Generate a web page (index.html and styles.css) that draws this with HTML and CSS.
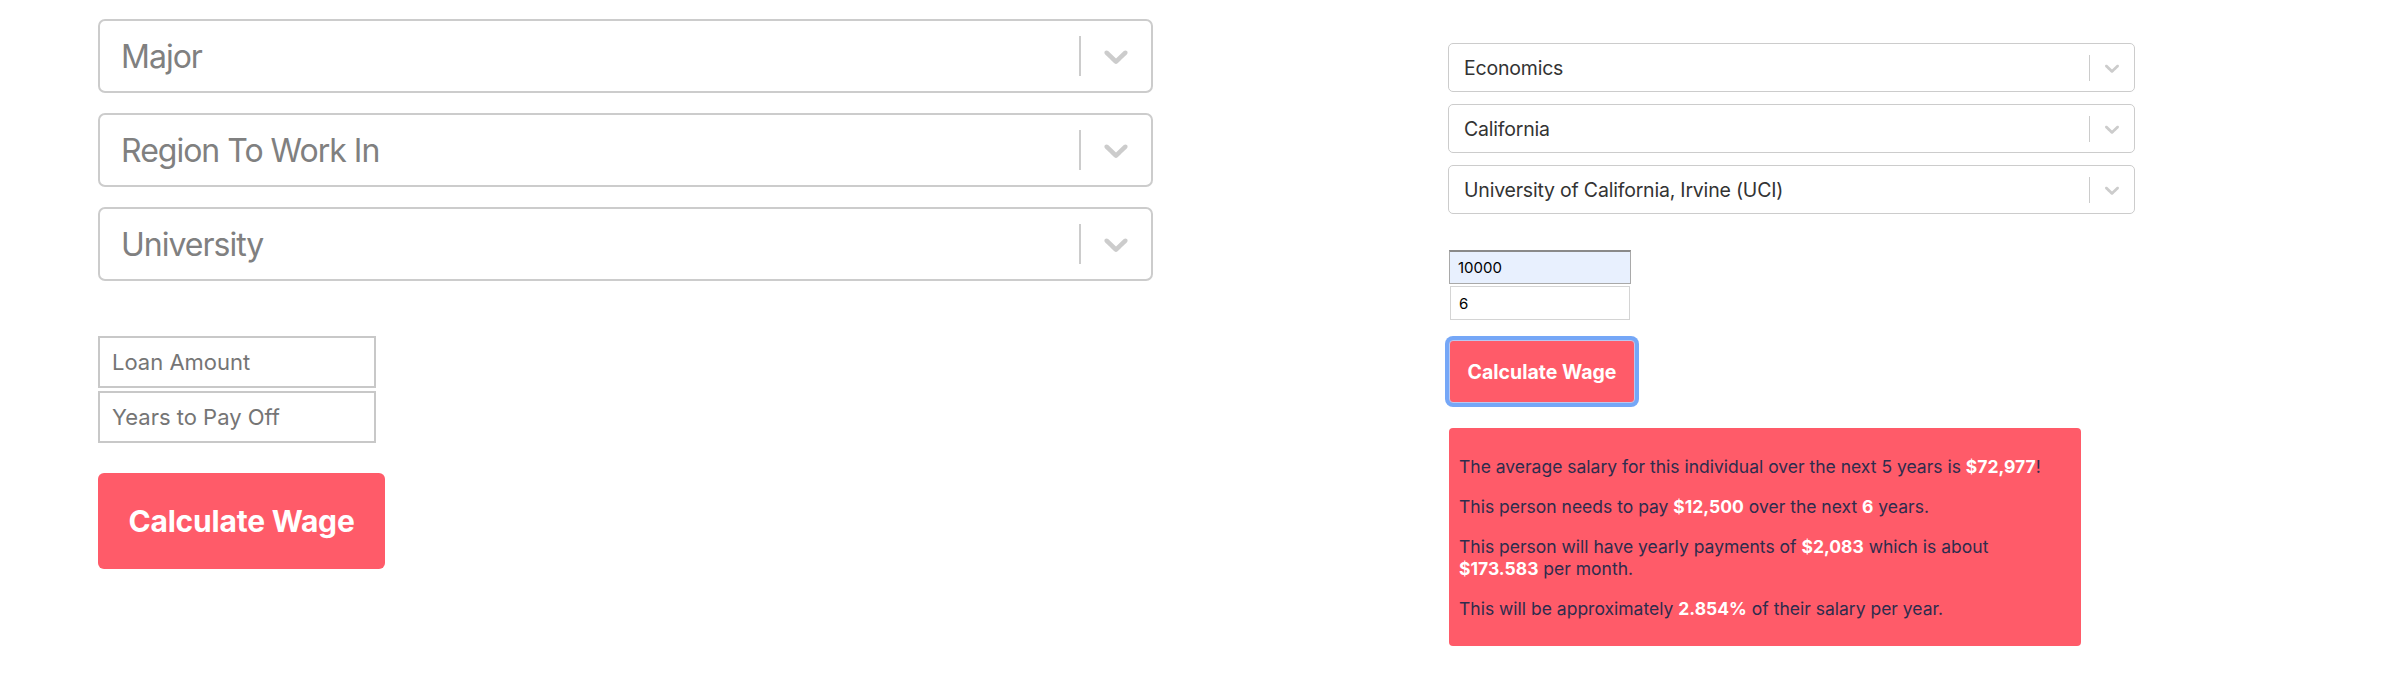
FILE: index.html
```html
<!DOCTYPE html>
<html>
<head>
<meta charset="utf-8">
<link rel="stylesheet" href="styles.css">
</head>
<body>
<div class="page">
  <div class="col-left">
    <div class="select-lg">
      <div class="value-lg placeholder">Major</div>
      <span class="sep-lg"></span>
      <div class="ind-lg"><svg viewBox="0 0 20 20" width="40" height="40"><path d="M4.516 7.548c0.436-0.446 1.043-0.481 1.576 0l3.908 3.747 3.908-3.747c0.533-0.481 1.141-0.446 1.574 0 0.436 0.445 0.408 1.197 0 1.615-0.406 0.418-4.695 4.502-4.695 4.502-0.217 0.223-0.502 0.335-0.787 0.335s-0.57-0.112-0.789-0.335c0 0-4.287-4.084-4.695-4.502s-0.436-1.17 0-1.615z"/></svg></div>
    </div>
    <div class="select-lg">
      <div class="value-lg placeholder">Region To Work In</div>
      <span class="sep-lg"></span>
      <div class="ind-lg"><svg viewBox="0 0 20 20" width="40" height="40"><path d="M4.516 7.548c0.436-0.446 1.043-0.481 1.576 0l3.908 3.747 3.908-3.747c0.533-0.481 1.141-0.446 1.574 0 0.436 0.445 0.408 1.197 0 1.615-0.406 0.418-4.695 4.502-4.695 4.502-0.217 0.223-0.502 0.335-0.787 0.335s-0.57-0.112-0.789-0.335c0 0-4.287-4.084-4.695-4.502s-0.436-1.17 0-1.615z"/></svg></div>
    </div>
    <div class="select-lg">
      <div class="value-lg placeholder">University</div>
      <span class="sep-lg"></span>
      <div class="ind-lg"><svg viewBox="0 0 20 20" width="40" height="40"><path d="M4.516 7.548c0.436-0.446 1.043-0.481 1.576 0l3.908 3.747 3.908-3.747c0.533-0.481 1.141-0.446 1.574 0 0.436 0.445 0.408 1.197 0 1.615-0.406 0.418-4.695 4.502-4.695 4.502-0.217 0.223-0.502 0.335-0.787 0.335s-0.57-0.112-0.789-0.335c0 0-4.287-4.084-4.695-4.502s-0.436-1.17 0-1.615z"/></svg></div>
    </div>
    <div class="inputs-lg">
      <input class="input-lg" type="text" placeholder="Loan Amount">
      <input class="input-lg" type="text" placeholder="Years to Pay Off">
    </div>
    <button class="btn-lg">Calculate Wage</button>
  </div>

  <div class="col-right">
    <div class="select-sm">
      <div class="value-sm">Economics</div>
      <span class="sep-sm"></span>
      <div class="ind-sm"><svg viewBox="0 0 20 20" width="24" height="24"><path d="M4.516 7.548c0.436-0.446 1.043-0.481 1.576 0l3.908 3.747 3.908-3.747c0.533-0.481 1.141-0.446 1.574 0 0.436 0.445 0.408 1.197 0 1.615-0.406 0.418-4.695 4.502-4.695 4.502-0.217 0.223-0.502 0.335-0.787 0.335s-0.57-0.112-0.789-0.335c0 0-4.287-4.084-4.695-4.502s-0.436-1.17 0-1.615z"/></svg></div>
    </div>
    <div class="select-sm">
      <div class="value-sm">California</div>
      <span class="sep-sm"></span>
      <div class="ind-sm"><svg viewBox="0 0 20 20" width="24" height="24"><path d="M4.516 7.548c0.436-0.446 1.043-0.481 1.576 0l3.908 3.747 3.908-3.747c0.533-0.481 1.141-0.446 1.574 0 0.436 0.445 0.408 1.197 0 1.615-0.406 0.418-4.695 4.502-4.695 4.502-0.217 0.223-0.502 0.335-0.787 0.335s-0.57-0.112-0.789-0.335c0 0-4.287-4.084-4.695-4.502s-0.436-1.17 0-1.615z"/></svg></div>
    </div>
    <div class="select-sm">
      <div class="value-sm">University of California, Irvine (UCI)</div>
      <span class="sep-sm"></span>
      <div class="ind-sm"><svg viewBox="0 0 20 20" width="24" height="24"><path d="M4.516 7.548c0.436-0.446 1.043-0.481 1.576 0l3.908 3.747 3.908-3.747c0.533-0.481 1.141-0.446 1.574 0 0.436 0.445 0.408 1.197 0 1.615-0.406 0.418-4.695 4.502-4.695 4.502-0.217 0.223-0.502 0.335-0.787 0.335s-0.57-0.112-0.789-0.335c0 0-4.287-4.084-4.695-4.502s-0.436-1.17 0-1.615z"/></svg></div>
    </div>
    <div class="inputs-sm">
      <input class="input-sm autofill" type="text" value="10000">
      <input class="input-sm plain" type="text" value="6">
    </div>
    <button class="btn-sm">Calculate Wage</button>
    <div class="result">
      <p>The average salary for this individual over the next 5 years is <b>$72,977</b>!</p>
      <p>This person needs to pay <b>$12,500</b> over the next <b>6</b> years.</p>
      <p>This person will have yearly payments of <b>$2,083</b> which is about <b>$173.583</b> per month.</p>
      <p>This will be approximately <b>2.854%</b> of their salary per year.</p>
    </div>
  </div>
</div>
</body>
</html>
```

FILE: styles.css
```css
* { box-sizing: border-box; }

html, body {
  margin: 0;
  background: #ffffff;
  font-family: Inter, "Noto Sans", "Liberation Sans", sans-serif;
}

.page {
  display: flex;
  align-items: flex-start;
  padding-left: 98px;
  gap: 295px;
}

/* ---------- left column ---------- */
.col-left {
  width: 1055px;
  padding-top: 19px;
  display: flex;
  flex-direction: column;
  align-items: flex-start;
}

.select-lg {
  width: 1055px;
  height: 74px;
  border: 2px solid #cccccc;
  border-radius: 7px;
  display: flex;
  align-items: center;
  margin-bottom: 20px;
  background: #fff;
}

.value-lg {
  flex: 1;
  padding-left: 21px;
  font-size: 32px;
  color: #808080;
  letter-spacing: -1px;
}

.sep-lg {
  width: 2px;
  height: 40px;
  background: #cccccc;
}

.ind-lg {
  width: 70px;
  display: flex;
  justify-content: center;
  align-items: center;
  fill: #cccccc;
}

.inputs-lg {
  margin-top: 35px;
  display: flex;
  flex-direction: column;
  gap: 3px;
}

.input-lg {
  width: 278px;
  height: 52px;
  border: 2px solid #c8c8c8;
  border-radius: 0;
  padding: 0 0 0 12px;
  font-family: inherit;
  font-size: 22px;
  color: #333;
  outline: none;
  background: #fff;
}

.input-lg::placeholder {
  color: #757575;
  opacity: 1;
}

.btn-lg {
  margin-top: 30px;
  width: 287px;
  height: 96px;
  border: none;
  border-radius: 6px;
  background: #ff5b69;
  color: #ffffff;
  font-family: inherit;
  font-size: 30px;
  font-weight: 700;
  letter-spacing: -0.2px;
  cursor: pointer;
}

/* ---------- right column ---------- */
.col-right {
  width: 687px;
  padding-top: 43px;
  display: flex;
  flex-direction: column;
  align-items: flex-start;
}

.select-sm {
  width: 687px;
  height: 49px;
  border: 1px solid #cccccc;
  border-radius: 5px;
  display: flex;
  align-items: center;
  margin-bottom: 12px;
  background: #fff;
}

.select-sm:nth-child(3) { margin-bottom: 0; }

.value-sm {
  flex: 1;
  padding-left: 15px;
  font-size: 19.5px;
  color: #333333;
  letter-spacing: -0.2px;
}

.sep-sm {
  width: 1px;
  height: 26px;
  background: #cccccc;
}

.ind-sm {
  width: 44px;
  display: flex;
  justify-content: center;
  align-items: center;
  fill: #cccccc;
}

.inputs-sm {
  margin-top: 36px;
  margin-left: 1px;
  display: flex;
  flex-direction: column;
  gap: 2px;
}

.input-sm {
  height: 34px;
  font-family: inherit;
  font-size: 15px;
  color: #000;
  padding: 0 0 0 8px;
  outline: none;
  border-radius: 0;
}

.input-sm.autofill {
  width: 182px;
  background: #e8f0fe;
  border: 1px solid #a9a9a9;
  border-top: 2px solid #8a8a8a;
}

.input-sm.plain {
  width: 180px;
  margin-left: 1px;
  background: #fff;
  border: 1px solid #d4d4d4;
}

.btn-sm {
  margin-top: 20px;
  margin-left: 1px;
  width: 186px;
  height: 63px;
  border: 1px solid #b9c8f0;
  border-radius: 4px;
  background: #ff5b69;
  color: #fff;
  font-family: inherit;
  font-size: 19.5px;
  font-weight: 700;
  box-shadow: 0 0 0 4px #75a7f7;
  cursor: pointer;
}

.result {
  margin-top: 25px;
  margin-left: 1px;
  width: 632px;
  background: #ff5b69;
  border-radius: 4px;
  padding: 10px 20px 8px 10px;
  color: #2e2c4d;
  font-size: 17.5px;
  line-height: 22px;
}

.result p {
  margin: 18px 0;
}

.result b {
  color: #ffffff;
  font-weight: 700;
}
```
